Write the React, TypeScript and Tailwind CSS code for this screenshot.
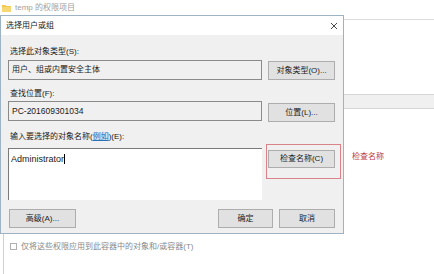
export default function App() {
  const btn =
    'flex items-center justify-center border border-[#adadad] bg-[#e1e1e1] text-[8px] text-[#222]';
  return (
    <div className="relative h-[274px] w-[434px] overflow-hidden bg-white font-['Liberation_Sans','Noto_Sans_CJK_SC',sans-serif] text-[#1a1a1a]">
      {/* background window title */}
      <div className="flex h-[15px] items-center gap-[4px] pl-[2px]">
        <svg width="9" height="8" viewBox="0 0 9 8">
          <path d="M0 1h3.5l1 1H9v6H0z" fill="#f2c94c" />
          <path d="M0 3h9v5H0z" fill="#f7d774" />
        </svg>
        <span className="text-[8px] text-[#a0a0a0]">temp 的权限项目</span>
      </div>

      <div className="flex">
        {/* dialog */}
        <div className="flex h-[219px] w-[344px] flex-col border border-[#9db3c4]">
          <div className="flex h-[19px] items-center justify-between bg-white pl-[5px] pr-[6px]">
            <span className="text-[8px]">选择用户或组</span>
            <svg width="6" height="6" viewBox="0 0 6 6">
              <path d="M0 0L6 6M6 0L0 6" stroke="#333" strokeWidth="0.9" />
            </svg>
          </div>
          <div className="flex flex-1 flex-col bg-[#f0f0f0] pl-[7px]">
            <div className="mt-[12px] h-[10px] pl-[2px] text-[8px] leading-[10px]">选择此对象类型(S):</div>
            <div className="mt-[3px] flex gap-[6px]">
              <div className="flex h-[20px] w-[254px] items-center border border-[#8a8a8a] bg-[#f0f0f0] pl-[3px] text-[8px]">
                用户、组或内置安全主体
              </div>
              <div className={`${btn} mt-[1px] h-[19px] w-[67px]`}>对象类型(O)...</div>
            </div>
            <div className="mt-[9px] h-[10px] pl-[2px] text-[8px] leading-[10px]">查找位置(F):</div>
            <div className="mt-[2px] flex gap-[6px]">
              <div className="flex h-[20px] w-[254px] items-center border border-[#8a8a8a] bg-[#f0f0f0] pl-[3px] text-[8.5px]">
                PC-201609301034
              </div>
              <div className={`${btn} mt-[2px] h-[19px] w-[67px]`}>位置(L)...</div>
            </div>
            <div className="mt-[10px] h-[10px] pl-[2px] text-[8px] leading-[10px]">
              输入要选择的对象名称(<span className="bg-[#cde3f7] text-[#2f6fb5] underline">例如</span>)(E):
            </div>
            <div className="mt-[6px] flex gap-[6px]">
              <div className="h-[52px] w-[254px] border-t border-l border-[#7a7a7a] bg-white pl-[2px] pt-[3px] text-[9px] leading-[11px]">
                Administrator<span className="inline-block h-[10px] w-px translate-y-[2px] bg-black" />
              </div>
              <div className="relative mt-[2px]">
                <div className={`${btn} h-[18px] w-[67px]`}>检查名称(C)</div>
                <div className="absolute left-[-2px] top-[-6px] h-[35px] w-[75px] border border-[#d9828a]" />
              </div>
            </div>
            <div className="mt-[9px] flex">
              <div className={`${btn} ml-[1px] h-[19px] w-[67px]`}>高级(A)...</div>
              <div className={`${btn} ml-[142px] h-[19px] w-[55px] border-[1.5px] border-[#2f78b9]`}>确定</div>
              <div className={`${btn} ml-[6px] h-[19px] w-[56px]`}>取消</div>
            </div>
          </div>
        </div>

        {/* background window right part */}
        <div className="flex flex-1 flex-col">
          <div className="mt-[4px] h-[75px] border-t border-[#dcdcdc] bg-white" />
          <div className="h-[15px] border-y border-[#d6d6d6] bg-[#f0f0f0]" />
        </div>
      </div>

      {/* lower area of background window */}
      <div className="ml-[3px] flex h-[40px] border-l border-[#d0d0d0] pl-[6px] pt-[8px]">
        <div className="mt-[1px] h-[7px] w-[7px] border border-[#b0b0b0] bg-white" />
        <span className="ml-[4px] text-[8px] leading-[9px] text-[#8a8a8a]">仅将这些权限应用到此容器中的对象和/或容器(T)</span>
      </div>

      {/* annotation */}
      <div className="absolute left-[352px] top-[151px] text-[8px] text-[#c0393b]">检查名称</div>
    </div>
  );
}
